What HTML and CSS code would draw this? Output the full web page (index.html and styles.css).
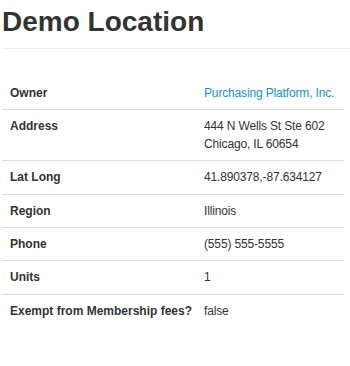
FILE: index.html
```html
<!DOCTYPE html>
<html>
<head>
<meta charset="utf-8">
<link rel="stylesheet" href="styles.css">
</head>
<body>
<div class="page">
  <div class="page-header">
    <h1 class="title">Demo Location</h1>
  </div>
  <table class="details">
    <tbody>
      <tr><th>Owner</th><td><a class="link" href="#">Purchasing Platform, Inc.</a></td></tr>
      <tr class="multi"><th>Address</th><td>444 N Wells St Ste 602<br>Chicago, IL 60654</td></tr>
      <tr><th>Lat Long</th><td>41.890378,-87.634127</td></tr>
      <tr><th>Region</th><td>Illinois</td></tr>
      <tr><th>Phone</th><td>(555) 555-5555</td></tr>
      <tr><th>Units</th><td>1</td></tr>
      <tr><th>Exempt from Membership fees?</th><td>false</td></tr>
    </tbody>
  </table>
</div>
</body>
</html>
```
FILE: styles.css
```css
html, body {
  margin: 0;
  padding: 0;
  background: #fff;
}
body {
  font-family: "Liberation Sans", Arial, sans-serif;
  font-size: 12px;
  line-height: 1.42857;
  color: #333;
}
.page {
  padding-left: 2px;
}
.page-header {
  padding-bottom: 10px;
  border-bottom: 1px solid #eee;
}
.title {
  margin: 7px 0 0;
  font-size: 28px;
  line-height: 1.1;
  font-weight: bold;
  color: #333;
}
.details {
  margin-top: 28px;
  width: 342px;
  table-layout: fixed;
  border-collapse: collapse;
  border-spacing: 0;
}
.details th,
.details td {
  padding: 8px 8px 7.33px;
  line-height: 17px;
  text-align: left;
  vertical-align: top;
  white-space: nowrap;
  border-top: 1px solid #ddd;
}
.details .multi th,
.details .multi td {
  line-height: 17.5px;
}
.details tr:first-child th,
.details tr:first-child td {
  border-top: none;
}
.details th {
  width: 178px;
  font-weight: bold;
}
.details td {
  letter-spacing: -0.15px;
}
.link {
  color: #1b8dd4;
  text-decoration: none;
}
```
